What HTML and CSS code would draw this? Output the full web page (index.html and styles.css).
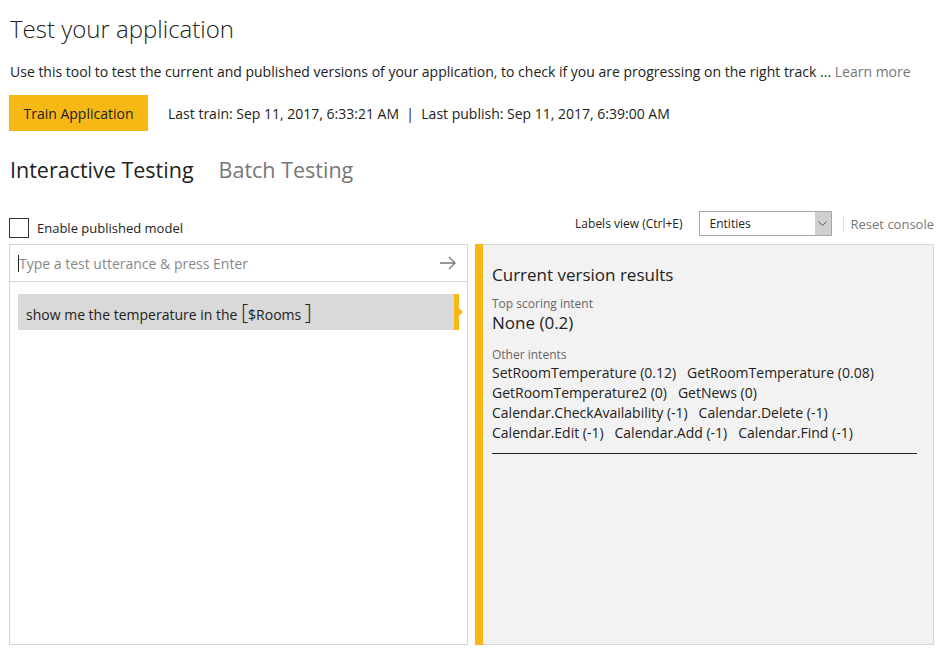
FILE: index.html
```html
<!DOCTYPE html>
<html lang="en">
<head>
<meta charset="utf-8">
<title>Test your application</title>
<link rel="stylesheet" href="styles.css">
</head>
<body>
<div class="page">
  <h1 class="title">Test your application</h1>
  <p class="desc">Use this tool to test the current and published versions of your application, to check if you are progressing on the right track ... <a class="learn">Learn more</a></p>
  <div class="train-row">
    <button class="train-btn">Train Application</button>
    <span class="train-info">Last train: Sep 11, 2017, 6:33:21 AM &nbsp;|&nbsp; Last publish: Sep 11, 2017, 6:39:00 AM</span>
  </div>
  <div class="tabs">
    <span class="tab active">Interactive Testing</span>
    <span class="tab">Batch Testing</span>
  </div>
  <div class="toolbar">
    <label class="enable"><span class="checkbox"></span><span>Enable published model</span></label>
    <div class="tools">
      <span class="labels-view">Labels view (Ctrl+E)</span>
      <div class="select"><span class="select-text">Entities</span><span class="select-arrow"><svg width="9" height="6" viewBox="0 0 9 6"><path d="M0.5 0.5 L4.5 4.5 L8.5 0.5" fill="none" stroke="#555" stroke-width="1"/></svg></span></div>
      <span class="sep"></span>
      <span class="reset">Reset console</span>
    </div>
  </div>
  <div class="panels">
    <div class="left">
      <div class="input-row">
        <span class="caret"></span><span class="placeholder">Type a test utterance &amp; press Enter</span>
        <svg class="send" width="18" height="14" viewBox="0 0 18 14"><path d="M1 7 H16 M10 1 L16 7 L10 13" fill="none" stroke="#7a7a7a" stroke-width="1.4"/></svg>
      </div>
      <div class="utterances">
        <div class="utterance">
          <span class="utt-text">show me the temperature in the <span class="br">[</span>$Rooms <span class="br">]</span></span>
          <span class="marker"></span>
        </div>
      </div>
    </div>
    <div class="right">
      <div class="right-bar"></div>
      <div class="results">
        <div class="res-title">Current version results</div>
        <div class="label">Top scoring intent</div>
        <div class="top-intent">None (0.2)</div>
        <div class="label other">Other intents</div>
        <div class="intents">
          <div>SetRoomTemperature (0.12)&nbsp;&nbsp; GetRoomTemperature (0.08)</div>
          <div>GetRoomTemperature2 (0)&nbsp;&nbsp; GetNews (0)</div>
          <div>Calendar.CheckAvailability (-1)&nbsp;&nbsp; Calendar.Delete (-1)</div>
          <div>Calendar.Edit (-1)&nbsp;&nbsp; Calendar.Add (-1)&nbsp;&nbsp; Calendar.Find (-1)</div>
        </div>
        <hr class="rule">
      </div>
    </div>
  </div>
</div>
</body>
</html>
```

FILE: styles.css
```css
* { box-sizing: border-box; }
html, body { margin: 0; padding: 0; background: #fff; }
body {
  font-family: "Open Sans", "Noto Sans", "DejaVu Sans", sans-serif;
  color: #222;
}
.page { padding: 0 16px 0 9px; width: 950px; }
.title {
  margin: 0;
  padding-top: 13px;
  font-size: 24px;
  font-weight: 300;
  line-height: 32px;
  color: #222;
  padding-left: 1px;
}
.desc {
  margin: 17px 0 0 1px;
  font-size: 14px;
  line-height: 20px;
}
.learn { color: #777; }
.train-row {
  margin-top: 13px;
  display: flex;
  align-items: center;
}
.train-btn {
  width: 139px;
  height: 36px;
  background: #f6b815;
  border: none;
  font-family: inherit;
  font-size: 14px;
  color: #222;
  padding: 0;
}
.train-info { margin-left: 20px; font-size: 14px; }
.tabs {
  margin-top: 24px;
  display: flex;
  gap: 25px;
  padding-left: 1px;
  font-size: 21.5px;
  line-height: 30px;
}
.tab { color: #777; }
.tab.active { color: #222; }
.toolbar {
  margin-top: 26px;
  display: flex;
  justify-content: space-between;
  align-items: flex-end;
  height: 33px;
  padding-bottom: 7px;
}
.enable { display: flex; align-items: flex-end; font-size: 13px; }
.checkbox {
  width: 20px; height: 20px;
  border: 1px solid #333;
  margin-right: 8px;
  margin-bottom: -1px;
}
.tools { display: flex; align-items: center; font-size: 12px; margin-bottom: 1px; }
.labels-view { margin-right: 16px; margin-left: -3px; }
.select {
  width: 133px; height: 25px;
  border: 1px solid #a6a6a6;
  display: flex;
  align-items: stretch;
}
.select-text { flex: 1; padding-left: 10px; line-height: 23px; }
.select-arrow {
  width: 16px;
  background: #d0d0d0;
  display: flex; align-items: center; justify-content: center;
}
.sep { width: 1px; height: 16px; background: #ddd; margin: 0 7px 0 11px; }
.reset { color: #777; font-size: 13px; }
.panels {
  display: flex;
  height: 401px;
}
.left {
  width: 459px;
  border: 1px solid #d6d6d6;
  display: flex;
  flex-direction: column;
}
.input-row {
  height: 37px;
  border-bottom: 1px solid #d6d6d6;
  display: flex;
  align-items: center;
  padding: 0 10px 0 8px;
}
.caret { width: 1px; height: 17px; background: #222; }
.placeholder { flex: 1; color: #888; font-size: 14px; }
.utterances { padding: 12px 0 0 8px; }
.utterance {
  width: 441px;
  height: 36px;
  background: #d9d9d9;
  display: flex;
  align-items: center;
  position: relative;
}
.utt-text { padding-left: 8px; font-size: 14px; flex: 1; }
.br { font-size: 22px; line-height: 20px; font-weight: 300; }
.marker {
  width: 5px; align-self: stretch; background: #f6b815; position: relative;
}
.marker::after {
  content: ""; position: absolute; left: 5px; top: 14px;
  border-left: 4px solid #f6b815; border-top: 4px solid transparent; border-bottom: 4px solid transparent;
}
.right {
  margin-left: 7px;
  flex: 1;
  display: flex;
}
.right-bar { width: 8px; background: #f6b815; }
.results {
  flex: 1;
  background: #f2f2f2;
  border: 1px solid #d6d6d6;
  border-left: none;
  padding: 18px 16px 0 9px;
}
.res-title { font-size: 17px; line-height: 24px; color: #222; }
.label { font-size: 12px; color: #666; margin-top: 9px; line-height: 16px; }
.label.other { margin-top: 13px; }
.top-intent { font-size: 17px; line-height: 22px; }
.intents { font-size: 14px; line-height: 20px; margin-top: 0; }
.rule { border: none; border-top: 1px solid #222; margin: 10px 0 0 0; }
```
